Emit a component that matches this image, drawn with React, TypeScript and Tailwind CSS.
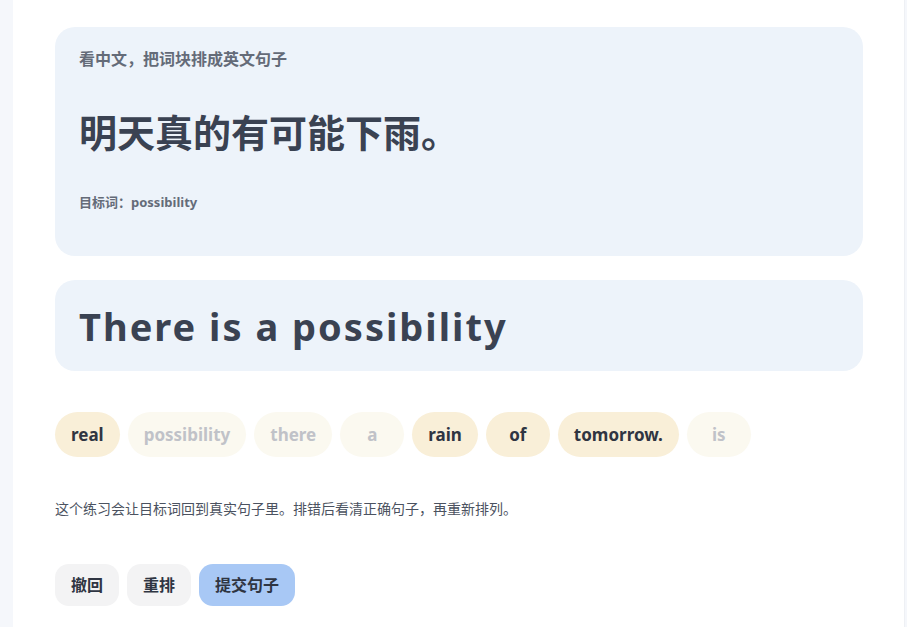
const words = [
  { text: "real", used: false },
  { text: "possibility", used: true },
  { text: "there", used: true },
  { text: "a", used: true },
  { text: "rain", used: false },
  { text: "of", used: false },
  { text: "tomorrow.", used: false },
  { text: "is", used: true },
];

const font = { fontFamily: '"Noto Sans", "Noto Sans CJK SC", sans-serif' };

export default function App() {
  return (
    <div className="min-h-screen bg-[#f5f7fb]" style={font}>
      <div className="ml-[13px] w-[892px] min-h-screen bg-white border-r border-[#eef0f4] pl-[42px] pr-[41px] pt-[27px] pb-6">
        <section className="rounded-[20px] bg-[#edf3fa] px-6 pt-[22px] pb-[45px]">
          <p className="text-[16px] leading-[20px] font-bold text-[#646b78]">看中文，把词块排成英文句子</p>
          <h1 className="mt-[39px] text-[38px] leading-[48px] font-bold text-[#3a4252]">明天真的有可能下雨。</h1>
          <p className="mt-[37px] text-[13px] leading-[18px] font-bold text-[#646b78]">目标词：possibility</p>
        </section>

        <section className="mt-6 rounded-[20px] bg-[#edf3fa] px-6 h-[91px] flex items-center">
          <p className="text-[38px] leading-[48px] font-bold tracking-[2px] text-[#3a4252]">There is a possibility</p>
        </section>

        <div className="mt-[41px] flex flex-wrap gap-2">
          {words.map((w, i) => (
            <button
              key={i}
              className={
                w.used
                  ? "h-[45px] min-w-[64px] rounded-full px-4 text-[17px] font-bold bg-[#fbf9f0] text-[#c0c2c8]"
                  : "h-[45px] min-w-[64px] rounded-full px-4 text-[17px] font-bold bg-[#f9efd8] text-[#2f3542]"
              }
            >
              {w.text}
            </button>
          ))}
        </div>

        <p className="mt-[42px] text-[14px] leading-[20px] text-[#4b5260]">
          这个练习会让目标词回到真实句子里。排错后看清正确句子，再重新排列。
        </p>

        <div className="mt-[45px] flex gap-2">
          <button className="rounded-[14px] bg-[#f3f3f4] px-4 py-[9px] text-[16px] leading-[24px] font-bold text-[#2f3542]">撤回</button>
          <button className="rounded-[14px] bg-[#f3f3f4] px-4 py-[9px] text-[16px] leading-[24px] font-bold text-[#2f3542]">重排</button>
          <button className="rounded-[14px] bg-[#a8c8f5] px-4 py-[9px] text-[16px] leading-[24px] font-bold text-[#2f3542]">提交句子</button>
        </div>
      </div>
    </div>
  );
}
